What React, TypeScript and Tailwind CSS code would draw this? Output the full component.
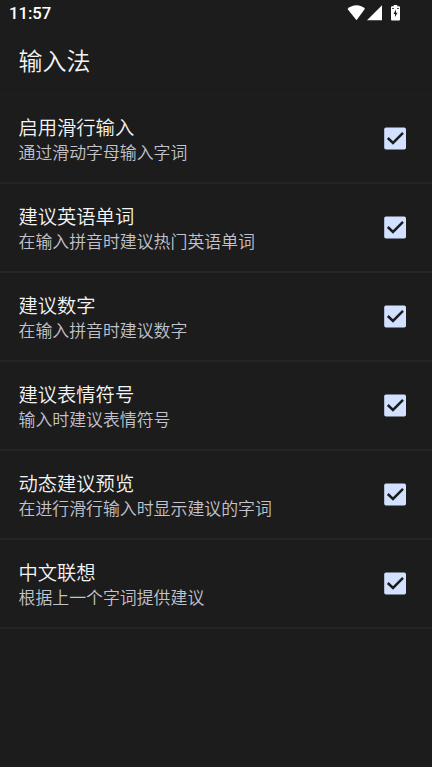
import { useState } from "react";

const settings = [
  { title: "启用滑行输入", description: "通过滑动字母输入字词" },
  { title: "建议英语单词", description: "在输入拼音时建议热门英语单词" },
  { title: "建议数字", description: "在输入拼音时建议数字" },
  { title: "建议表情符号", description: "输入时建议表情符号" },
  { title: "动态建议预览", description: "在进行滑行输入时显示建议的字词" },
  { title: "中文联想", description: "根据上一个字词提供建议" },
];

function StatusBar() {
  return (
    <div className="flex h-[26px] items-center justify-between pr-8 pl-[9px] text-white">
      <span className="pt-0.5 text-[16.7px] leading-[26px] font-medium">11:57</span>
      <div className="flex items-start">
        <svg width="18" height="16" viewBox="0 0 18 16" fill="currentColor">
          <path d="M9.500 15.200.5 4C3.100 1.400 6.100.2 9.500.2s6.200 1.200 8.500 3.600z" />
        </svg>
        <svg className="ml-0.5" width="15" height="16" viewBox="0 0 15 16" fill="currentColor">
          <path d="M15 .2v15H0z" />
        </svg>
        <svg className="ml-[9px]" width="9" height="16" viewBox="0 0 9 16">
          <path
            d="M2.700 0h3.600v1.200h1.700a1 1 0 0 1 1 1V14.500a1 1 0 0 1-1 1H1a1 1 0 0 1-1-1V2.200a1 1 0 0 1 1-1h1.700z"
            fill="currentColor"
          />
          <path d="M5 4.600v3.200h1.500L4 12V9H2.500zM1 3h2v.8H1zM6 3h2v.8H6z" fill="#1c1c1c" />
        </svg>
      </div>
    </div>
  );
}

function SettingRow({ title, description }: { title: string; description: string }) {
  const [checked, setChecked] = useState(true);
  return (
    <button
      type="button"
      role="checkbox"
      aria-checked={checked}
      onClick={() => setChecked(!checked)}
      className="flex h-[89px] w-full items-center justify-between border-b-2 border-[#252525] pr-[26px] pl-[18.5px] text-left"
    >
      <span className="flex flex-col pt-1">
        <span className="text-[19.3px] leading-[25px] font-[350] text-[#f4f4f6]">{title}</span>
        <span className="text-[16.9px] leading-[24px] font-[350] text-[#c2c3cd]">{description}</span>
      </span>
      <svg width="23" height="23" viewBox="0 0 23 23" fill="none">
        <rect x="1.200" y=".5" width="21.800" height="22" rx="1.800" fill="#d1e1ff" />
        {checked && <path d="m4.800 11 5.200 5L20 5.900" stroke="#1c1c1c" strokeWidth="2.500" />}
      </svg>
    </button>
  );
}

export default function App() {
  return (
    <div className="flex h-[767px] w-[432px] flex-col bg-[#1c1c1c] font-['Roboto','Noto_Sans_CJK_SC',sans-serif]">
      <StatusBar />
      <header className="flex h-[69px] items-center border-b border-[#1f1f1f] pt-1 pl-[18.5px]">
        <h1 className="text-[24px] leading-[36px] font-[350] text-[#f4f4f6]">输入法</h1>
      </header>
      <main>
        {settings.map((item) => (
          <SettingRow key={item.title} {...item} />
        ))}
      </main>
    </div>
  );
}
